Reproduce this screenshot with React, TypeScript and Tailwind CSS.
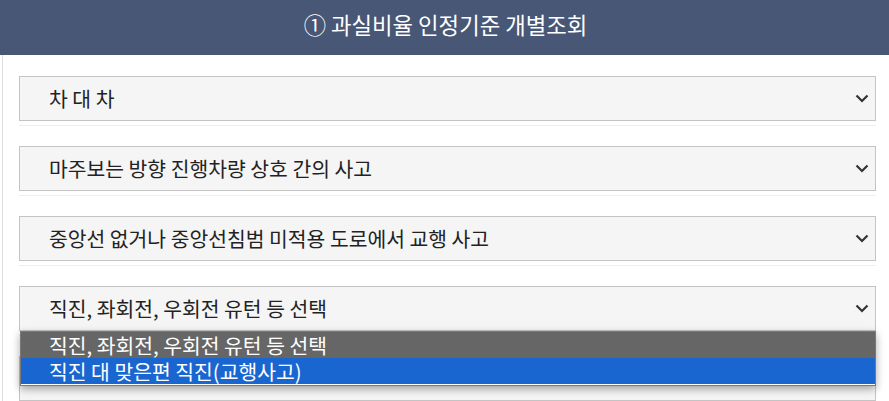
const FONT = { fontFamily: '"Noto Sans CJK KR", "Noto Sans", sans-serif' };

const rows = [
  "차 대 차",
  "마주보는 방향 진행차량 상호 간의 사고",
  "중앙선 없거나 중앙선침범 미적용 도로에서 교행 사고",
  "직진, 좌회전, 우회전 유턴 등 선택",
  "",
];

function Chevron() {
  return (
    <svg width="14" height="9" viewBox="0 0 14 9" className="shrink-0">
      <path d="M1.5 1.5 L7 7 L12.5 1.5" fill="none" stroke="#333" strokeWidth="2.2" />
    </svg>
  );
}

function SelectBox({ label }: { label: string }) {
  return (
    <div className="h-[45px] flex items-center justify-between bg-[#f5f5f5] border border-[#c4c4c4] pl-[29px] pr-[6px]">
      <span className="text-[20.4px] text-[#222] leading-none">{label}</span>
      {label && <Chevron />}
    </div>
  );
}

export default function App() {
  return (
    <div className="w-[889px] h-[401px] bg-white overflow-hidden relative" style={FONT}>
      <div className="h-[55px] bg-[#485776] flex items-center justify-center pb-[7px] pl-[2px]">
        <h1 className="text-white text-[22.3px] leading-none">① 과실비율 인정기준 개별조회</h1>
      </div>
      <div className="ml-[2px] border-l border-[#dcdcdc] h-[346px] pt-[21px] pl-[16px] pr-[13px]">
        {rows.map((r, i) => (
          <div key={i} className="pb-[4px] border-b border-[#eeeeee] mb-[20px]">
            <SelectBox label={r} />
          </div>
        ))}
      </div>
      <div className="absolute left-[20px] top-[331px] w-[856px] border border-[#7a7a7a] bg-white shadow-[0_3px_8px_rgba(0,0,0,0.35)]">
        <div className="h-[26px] bg-[#666666] flex items-center pl-[28px]">
          <span className="text-white text-[20.4px] leading-none">직진, 좌회전, 우회전 유턴 등 선택</span>
        </div>
        <div className="h-[26px] bg-[#1a66d1] flex items-center pl-[28px]">
          <span className="text-white text-[20.4px] leading-none">직진 대 맞은편 직진(교행사고)</span>
        </div>
        <div className="h-[1px] bg-white" />
      </div>
    </div>
  );
}
